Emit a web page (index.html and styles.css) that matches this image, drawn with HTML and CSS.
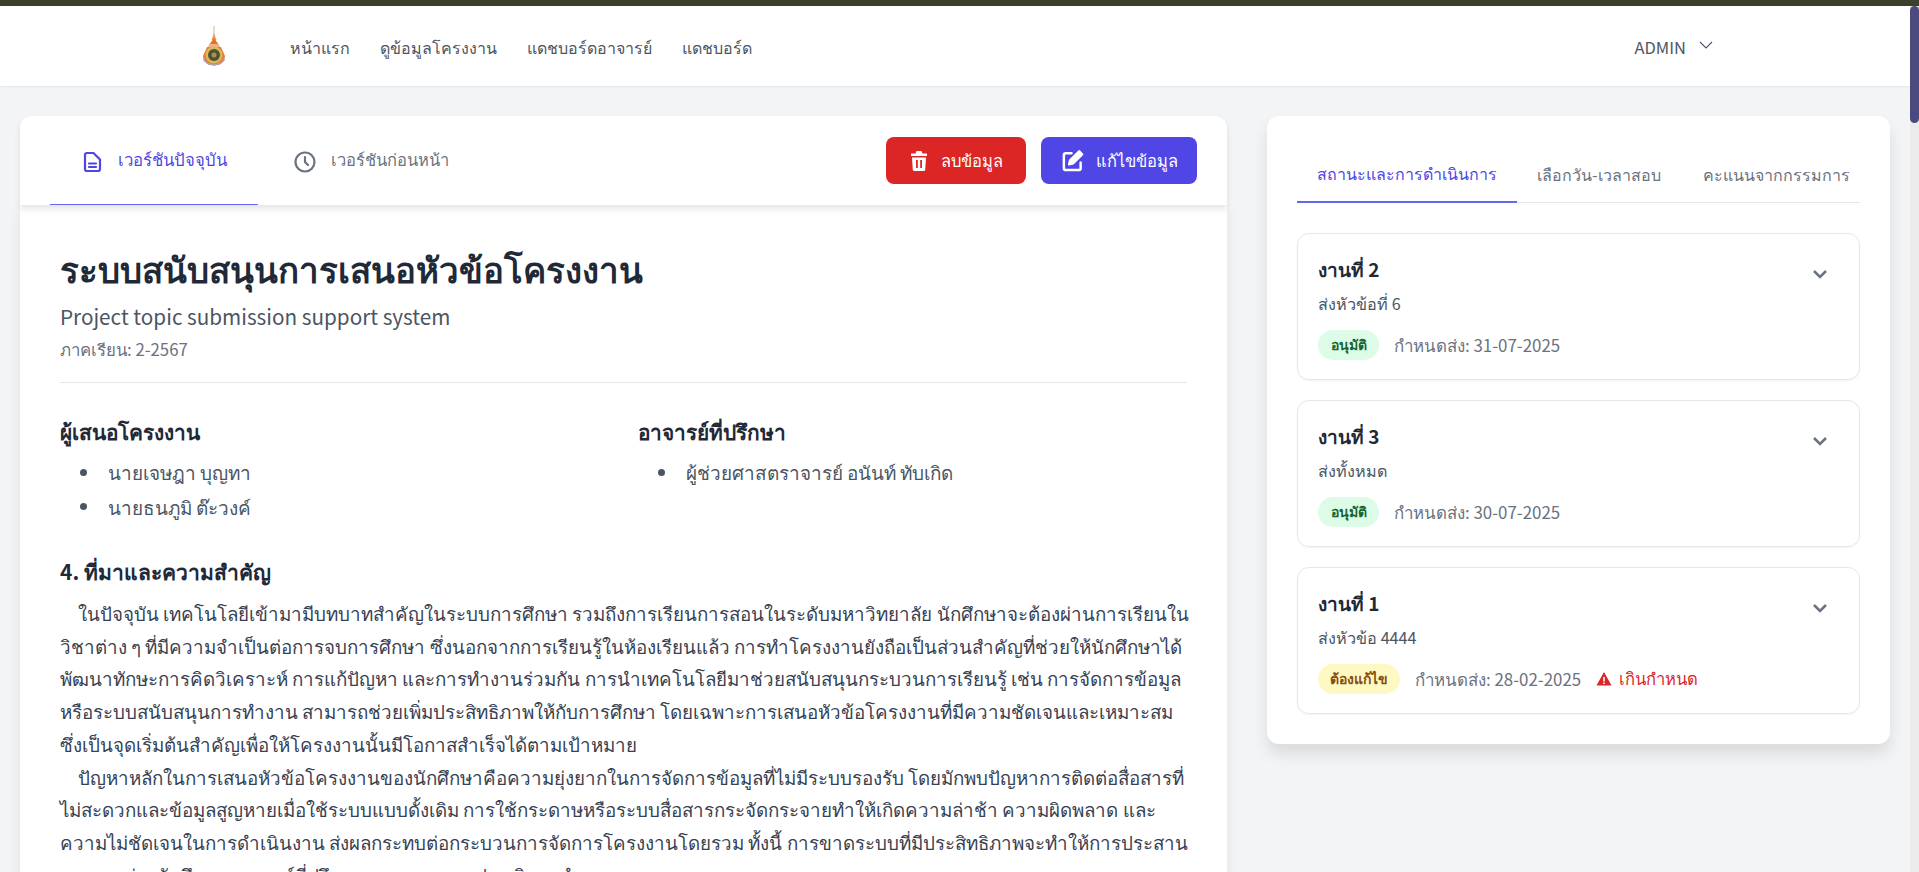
FILE: index.html
```html
<!DOCTYPE html>
<html lang="th">
<head>
<meta charset="utf-8">
<title>ระบบสนับสนุนการเสนอหัวข้อโครงงาน</title>
<link rel="stylesheet" href="styles.css">
</head>
<body>
<div class="topstrip"></div>
<header class="nav">
  <svg class="logo" width="24" height="40" viewBox="0 0 24 40">
    <path d="M11.500 0h1v10h-1z" fill="#dcb28e"/>
    <path d="M12 7l2.500 7h-5z" fill="#ee9a5c"/>
    <path d="M12 12l5 7H7z" fill="#e0722a"/>
    <path d="M7 18h10l1 4H6z" fill="#f2b184"/>
    <path d="M5 21h14l4 9-1 5-5 4H7l-5-4-1-5z" fill="#e77f33"/>
    <circle cx="12" cy="29" r="8.500" fill="#d8b75c"/>
    <circle cx="12" cy="29" r="6" fill="#4d5236"/>
    <circle cx="12" cy="29" r="2.500" fill="#a89150"/>
    <path d="M2 32a10.500 9 0 0 0 20 0l1 2-4 4-7 2-7-2-4-4z" fill="#a9a3c4"/>
  </svg>
  <nav class="links">
    <a>หน้าแรก</a>
    <a>ดูข้อมูลโครงงาน</a>
    <a>แดชบอร์ดอาจารย์</a>
    <a>แดชบอร์ด</a>
  </nav>
  <div class="user">
    <span>ADMIN</span>
    <svg width="16" height="16" viewBox="0 0 16 16" fill="none" stroke="#4b5563" stroke-width="1.100"><path d="M2 5l6 6 6-6"/></svg>
  </div>
</header>
<main class="page">
  <section class="left">
    <div class="tabbar">
      <div class="tabs">
        <a class="tab active">
          <svg width="24" height="24" viewBox="0 0 24 24" fill="none" stroke="currentColor" stroke-width="2.200" stroke-linecap="round" stroke-linejoin="round"><path d="M7 3h6.500L20 9.500V19a2 2 0 0 1-2 2H7a2 2 0 0 1-2-2V5a2 2 0 0 1 2-2z"/><path d="M9 13.500h7M9 17h7"/></svg>
          <span>เวอร์ชันปัจจุบัน</span>
        </a>
        <a class="tab">
          <svg width="24" height="24" viewBox="0 0 24 24" fill="none" stroke="currentColor" stroke-width="2.200" stroke-linecap="round" stroke-linejoin="round"><circle cx="12" cy="12" r="9.500"/><path d="M12 7v5l3 3"/></svg>
          <span>เวอร์ชันก่อนหน้า</span>
        </a>
      </div>
      <div class="actions">
        <button class="btn danger">
          <svg width="20" height="22" viewBox="0 0 20 22" fill="#fff"><path d="M7.500 1h5l1 2.500H18V6H2V3.500h4.500z"/><path fill-rule="evenodd" d="M3 7.500h14l-.8 12.500a1.500 1.500 0 0 1-1.500 1H5.300a1.500 1.500 0 0 1-1.500-1zM7 10v8h1.800v-8zM11.200 10v8H13v-8z"/></svg>
          <span>ลบข้อมูล</span>
        </button>
        <button class="btn primary">
          <svg width="23" height="23" viewBox="0 0 24 24" fill="none" stroke="#fff" stroke-width="2.600" stroke-linecap="round" stroke-linejoin="round"><path d="M11 4.500H5a2 2 0 0 0-2 2V20a2 2 0 0 0 2 2h13.500a2 2 0 0 0 2-2v-6"/><path d="M19 2.500l3 3L12.500 15l-4 1 1-4z" fill="#fff"/></svg>
          <span>แก้ไขข้อมูล</span>
        </button>
      </div>
    </div>
    <article class="content">
      <h1>ระบบสนับสนุนการเสนอหัวข้อโครงงาน</h1>
      <p class="en">Project topic submission support system</p>
      <p class="term">ภาคเรียน: 2-2567</p>
      <hr>
      <div class="people">
        <div>
          <h2>ผู้เสนอโครงงาน</h2>
          <ul><li>นายเจษฎา บุญทา</li><li>นายธนภูมิ ต๊ะวงค์</li></ul>
        </div>
        <div>
          <h2>อาจารย์ที่ปรึกษา</h2>
          <ul><li>ผู้ช่วยศาสตราจารย์ อนันท์ ทับเกิด</li></ul>
        </div>
      </div>
      <h3>4. ที่มาและความสำคัญ</h3>
      <p class="para">ในปัจจุบัน เทคโนโลยีเข้ามามีบทบาทสำคัญในระบบการศึกษา รวมถึงการเรียนการสอนในระดับมหาวิทยาลัย นักศึกษาจะต้องผ่านการเรียนใน<br>วิชาต่าง ๆ ที่มีความจำเป็นต่อการจบการศึกษา ซึ่งนอกจากการเรียนรู้ในห้องเรียนแล้ว การทำโครงงานยังถือเป็นส่วนสำคัญที่ช่วยให้นักศึกษาได้<br>พัฒนาทักษะการคิดวิเคราะห์ การแก้ปัญหา และการทำงานร่วมกัน การนำเทคโนโลยีมาช่วยสนับสนุนกระบวนการเรียนรู้ เช่น การจัดการข้อมูล<br>หรือระบบสนับสนุนการทำงาน สามารถช่วยเพิ่มประสิทธิภาพให้กับการศึกษา โดยเฉพาะการเสนอหัวข้อโครงงานที่มีความชัดเจนและเหมาะสม<br>ซึ่งเป็นจุดเริ่มต้นสำคัญเพื่อให้โครงงานนั้นมีโอกาสสำเร็จได้ตามเป้าหมาย</p>
      <p class="para">ปัญหาหลักในการเสนอหัวข้อโครงงานของนักศึกษาคือความยุ่งยากในการจัดการข้อมูลที่ไม่มีระบบรองรับ โดยมักพบปัญหาการติดต่อสื่อสารที่<br>ไม่สะดวกและข้อมูลสูญหายเมื่อใช้ระบบแบบดั้งเดิม การใช้กระดาษหรือระบบสื่อสารกระจัดกระจายทำให้เกิดความล่าช้า ความผิดพลาด และ<br>ความไม่ชัดเจนในการดำเนินงาน ส่งผลกระทบต่อกระบวนการจัดการโครงงานโดยรวม ทั้งนี้ การขาดระบบที่มีประสิทธิภาพจะทำให้การประสาน<br>งานระหว่างนักศึกษา อาจารย์ที่ปรึกษา และกรรมการประเมินผลลำบาก</p>
    </article>
  </section>
  <aside class="right">
    <div class="rtabs">
      <a class="rtab active">สถานะและการดำเนินการ</a>
      <a class="rtab">เลือกวัน-เวลาสอบ</a>
      <a class="rtab">คะแนนจากกรรมการ</a>
    </div>
    <div class="cards">
      <div class="card">
        <div class="card-main">
          <h4>งานที่ 2</h4>
          <p class="desc">ส่งหัวข้อที่ 6</p>
          <div class="meta"><span class="badge ok">อนุมัติ</span><span>กำหนดส่ง: 31-07-2025</span></div>
        </div>
        <svg class="chev" width="20" height="20" viewBox="0 0 20 20" fill="none" stroke="#6b7280" stroke-width="2.600"><path d="M4 7l6 6 6-6"/></svg>
      </div>
      <div class="card">
        <div class="card-main">
          <h4>งานที่ 3</h4>
          <p class="desc">ส่งทั้งหมด</p>
          <div class="meta"><span class="badge ok">อนุมัติ</span><span>กำหนดส่ง: 30-07-2025</span></div>
        </div>
        <svg class="chev" width="20" height="20" viewBox="0 0 20 20" fill="none" stroke="#6b7280" stroke-width="2.600"><path d="M4 7l6 6 6-6"/></svg>
      </div>
      <div class="card">
        <div class="card-main">
          <h4>งานที่ 1</h4>
          <p class="desc">ส่งหัวข้อ 4444</p>
          <div class="meta"><span class="badge warn">ต้องแก้ไข</span><span>กำหนดส่ง: 28-02-2025</span><span class="late"><svg width="16" height="16" viewBox="0 0 16 16"><path fill-rule="evenodd" d="M8 1l7.500 13.500h-15zM7.200 6v4.500h1.600V6zM7.200 11.500v1.500h1.600v-1.500z" fill="#dc2626"/></svg>เกินกำหนด</span></div>
        </div>
        <svg class="chev" width="20" height="20" viewBox="0 0 20 20" fill="none" stroke="#6b7280" stroke-width="2.600"><path d="M4 7l6 6 6-6"/></svg>
      </div>
    </div>
  </aside>
</main>
<div class="scrollbar"><div class="thumb"></div></div>
</body>
</html>
```
FILE: styles.css
```css
* { box-sizing: border-box; }
html, body { margin: 0; height: 872px; overflow: hidden; }
body {
  background: #f3f4f6;
  font-family: "Noto Sans CJK JP", sans-serif;
  color: #1f2937;
  font-size: 16px;
}
.topstrip { height: 6px; background: #3a402a; }
.nav {
  height: 80px;
  background: #fff;
  display: flex;
  align-items: center;
  padding: 0 205px 0 202px;
  box-shadow: 0 1px 2px rgba(0,0,0,.06);
  position: relative;
}
.logo { margin-right: 64px; flex: none; }
.links { display: flex; gap: 30px; font-size: 16px; color: #4b5563; padding-top: 4px; }
.user { margin-left: auto; display: flex; align-items: center; gap: 12px; font-size: 16.500px; color: #4b5563; padding-top: 2px; }
.user span { margin-left: -2px; }
.user svg { margin-top: -4px; }
.page {
  display: flex;
  align-items: flex-start;
  gap: 40px;
  padding: 30px 29px 0 20px;
}
.left { width: 1207px; flex: none; }
.tabbar {
  height: 89px;
  background: #fff;
  border-radius: 12px 12px 0 0;
  display: flex;
  justify-content: space-between;
  padding: 0 30px;
  box-shadow: 0 4px 6px rgba(0,0,0,.1);
  position: relative;
}
.tabs { display: flex; }
.tab {
  display: flex;
  align-items: center;
  gap: 14px;
  padding: 0 30px 0 32px;
  color: #6b7280;
  font-size: 16.500px;
  border-bottom: 1px solid transparent;
  height: 89px;
}
.tab svg { margin-top: 3px; }
.tab:first-child { width: 208px; flex: none; padding: 0 0 0 30px; margin-right: 3px; font-size: 16.800px; }
.tab.active { color: #4f46e5; border-bottom-color: #6366f1; }
.actions { display: flex; gap: 15px; padding-top: 21px; }
.btn {
  border: 0;
  height: 47px;
  border-radius: 8px;
  color: #fff;
  font: 500 16.500px "Noto Sans CJK JP", sans-serif;
  display: flex;
  align-items: center;
  justify-content: center;
  gap: 12px;
}
.danger { width: 140px; background: #dc2626; }
.primary { width: 156px; background: #4f46e5; }
.content {
  background: #fff;
  padding: 39px 40px 40px;
  height: 700px;
  box-shadow: 0 4px 12px rgba(0,0,0,.08);
}
h1 { margin: 0; font-size: 34.800px; line-height: 48px; font-weight: 700; color: #1f2937; }
.en { margin: 10px 0 0; font-size: 20.700px; line-height: 28px; color: #4b5563; }
.term { margin: 7px 0 0; font-size: 16.800px; line-height: 24px; color: #6b7280; }
hr { border: 0; border-top: 1px solid #e5e7eb; margin: 21px 0 30px; }
.people { display: grid; grid-template-columns: 1fr 1fr; gap: 0 29px; }
h2 { margin: 0 0 6px; font-size: 20.800px; line-height: 36px; font-weight: 700; color: #1f2937; }
ul { margin: 0; padding-left: 20px; color: #4b5563; font-size: 18.900px; line-height: 34.500px; list-style: none; }
li { display: flex; align-items: center; gap: 21px; }
li::before { content: ""; width: 7px; height: 7px; border-radius: 50%; background: #4b5563; flex: none; }
h3 { margin: 29px 0 8px; font-size: 21px; line-height: 36px; font-weight: 700; color: #1f2937; }
.para { margin: 0; font-size: 18.750px; line-height: 32.700px; text-indent: 18px; color: #374151; white-space: nowrap; }
.right {
  width: 623px;
  flex: none;
  background: #fff;
  border-radius: 12px;
  padding: 30px;
  box-shadow: 0 10px 15px rgba(0,0,0,.1);
  height: 628px;
}
.rtabs { display: flex; border-bottom: 1px solid #e5e7eb; height: 57px; }
.rtab { padding: 0 20px; font-size: 16px; color: #6b7280; height: 57px; display: flex; align-items: center; white-space: nowrap; }
.rtab:nth-child(2) { padding-right: 22px; }
.rtab.active { color: #4f46e5; border-bottom: 2px solid #6366f1; }
.cards { margin-top: 30px; display: flex; flex-direction: column; gap: 20px; }
.card {
  height: 147px;
  border: 1px solid #e5e7eb;
  border-radius: 12px;
  padding: 19px 20px;
  display: flex;
  justify-content: space-between;
  box-shadow: 0 1px 2px rgba(0,0,0,.05);
}
h4 { margin: 0; font-size: 19px; line-height: 32px; font-weight: 700; color: #1f2937; }
.desc { margin: 4px 0 0; font-size: 16.200px; line-height: 28px; color: #4b5563; }
.meta { display: flex; align-items: center; gap: 15px; margin-top: 13px; font-size: 16.900px; color: #6b7280; }
.badge { height: 30px; border-radius: 15px; padding: 0 12.500px; font-size: 14px; font-weight: 700; display: flex; align-items: center; }
.ok { background: #dcfce7; color: #166534; }
.warn { background: #fef9c3; color: #854d0e; padding: 0 12px; }
.late { display: flex; align-items: center; gap: 7px; color: #dc2626; font-size: 16.600px; }
.chev { margin: 11px 9px 0 0; flex: none; }
.scrollbar { position: fixed; top: 6px; right: 0; bottom: 0; width: 9px; background: #ebebeb; }
.thumb { width: 9px; height: 117px; background: #4a4a7f; border-radius: 5px; }
```
